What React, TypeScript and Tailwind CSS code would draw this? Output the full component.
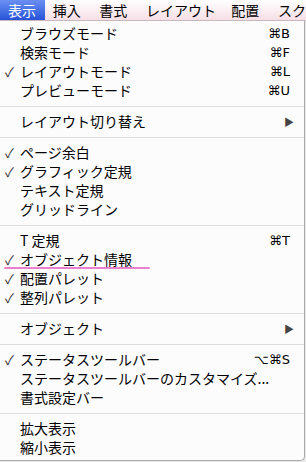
import React from 'react';

type Item = { label?: string; check?: boolean; key?: string; sub?: boolean; sep?: boolean; mark?: boolean };

const items: Item[] = [
  { label: 'ブラウズモード', key: '⌘B' },
  { label: '検索モード', key: '⌘F' },
  { label: 'レイアウトモード', key: '⌘L', check: true },
  { label: 'プレビューモード', key: '⌘U' },
  { sep: true },
  { label: 'レイアウト切り替え', sub: true },
  { sep: true },
  { label: 'ページ余白', check: true },
  { label: 'グラフィック定規', check: true },
  { label: 'テキスト定規' },
  { label: 'グリッドライン' },
  { sep: true },
  { label: 'T 定規', key: '⌘T' },
  { label: 'オブジェクト情報', check: true, mark: true },
  { label: '配置パレット', check: true },
  { label: '整列パレット', check: true },
  { sep: true },
  { label: 'オブジェクト', sub: true },
  { sep: true },
  { label: 'ステータスツールバー', key: '⌥⌘S', check: true },
  { label: 'ステータスツールバーのカスタマイズ...' },
  { label: '書式設定バー' },
  { sep: true },
  { label: '拡大表示' },
  { label: '縮小表示' },
];

const font = { fontFamily: '"Noto Sans CJK JP", "Liberation Sans", sans-serif' };

export default function App() {
  return (
    <div className="w-[306px] h-[462px] bg-[#e9e9e9] overflow-hidden text-black" style={font}>
      {/* menu bar */}
      <div className="h-[21px] flex items-stretch bg-gradient-to-b from-white to-[#f6dfe6] border-b border-[#c9b9be] text-[14px] leading-[21px] whitespace-nowrap">
        <div className="w-[45px] pl-[8px] text-white bg-gradient-to-b from-[#6b8ff2] to-[#2752d8]">表示</div>
        <div className="w-[47px] pl-[8px]">挿入</div>
        <div className="w-[47px] pl-[8px]">書式</div>
        <div className="w-[86px] pl-[8px]">レイアウト</div>
        <div className="w-[47px] pl-[8px]">配置</div>
        <div className="pl-[8px]">スク</div>
      </div>
      {/* dropdown */}
      <div className="w-[305px] h-[440px] bg-[#fcfcfc] border-r border-b border-[#a9a9a9] rounded-br-[5px] pt-[3px] text-[14px]">
        {items.map((it, i) =>
          it.sep ? (
            <div key={i} className="h-[12px] flex items-center">
              <div className="w-full h-px bg-[#dcdcdc]" />
            </div>
          ) : (
            <div key={i} className="relative h-[19px] flex items-center pr-[14px] leading-[19px] whitespace-nowrap">
              <span className="w-[20px] pl-[5px] text-[13px] text-[#333]">{it.check ? '✓' : ''}</span>
              <span className="flex-1">{it.label}</span>
              {it.key && <span className="text-[13px]" style={{ fontFamily: '"DejaVu Sans", sans-serif' }}>{it.key}</span>}
              {it.sub && <span className="text-[10px] text-[#444] mr-[-4px]">▶</span>}
              {it.mark && <div className="absolute left-[4px] top-[17px] w-[146px] h-[2px] rounded-full bg-[#ea7fcf]" />}
            </div>
          )
        )}
      </div>
    </div>
  );
}
